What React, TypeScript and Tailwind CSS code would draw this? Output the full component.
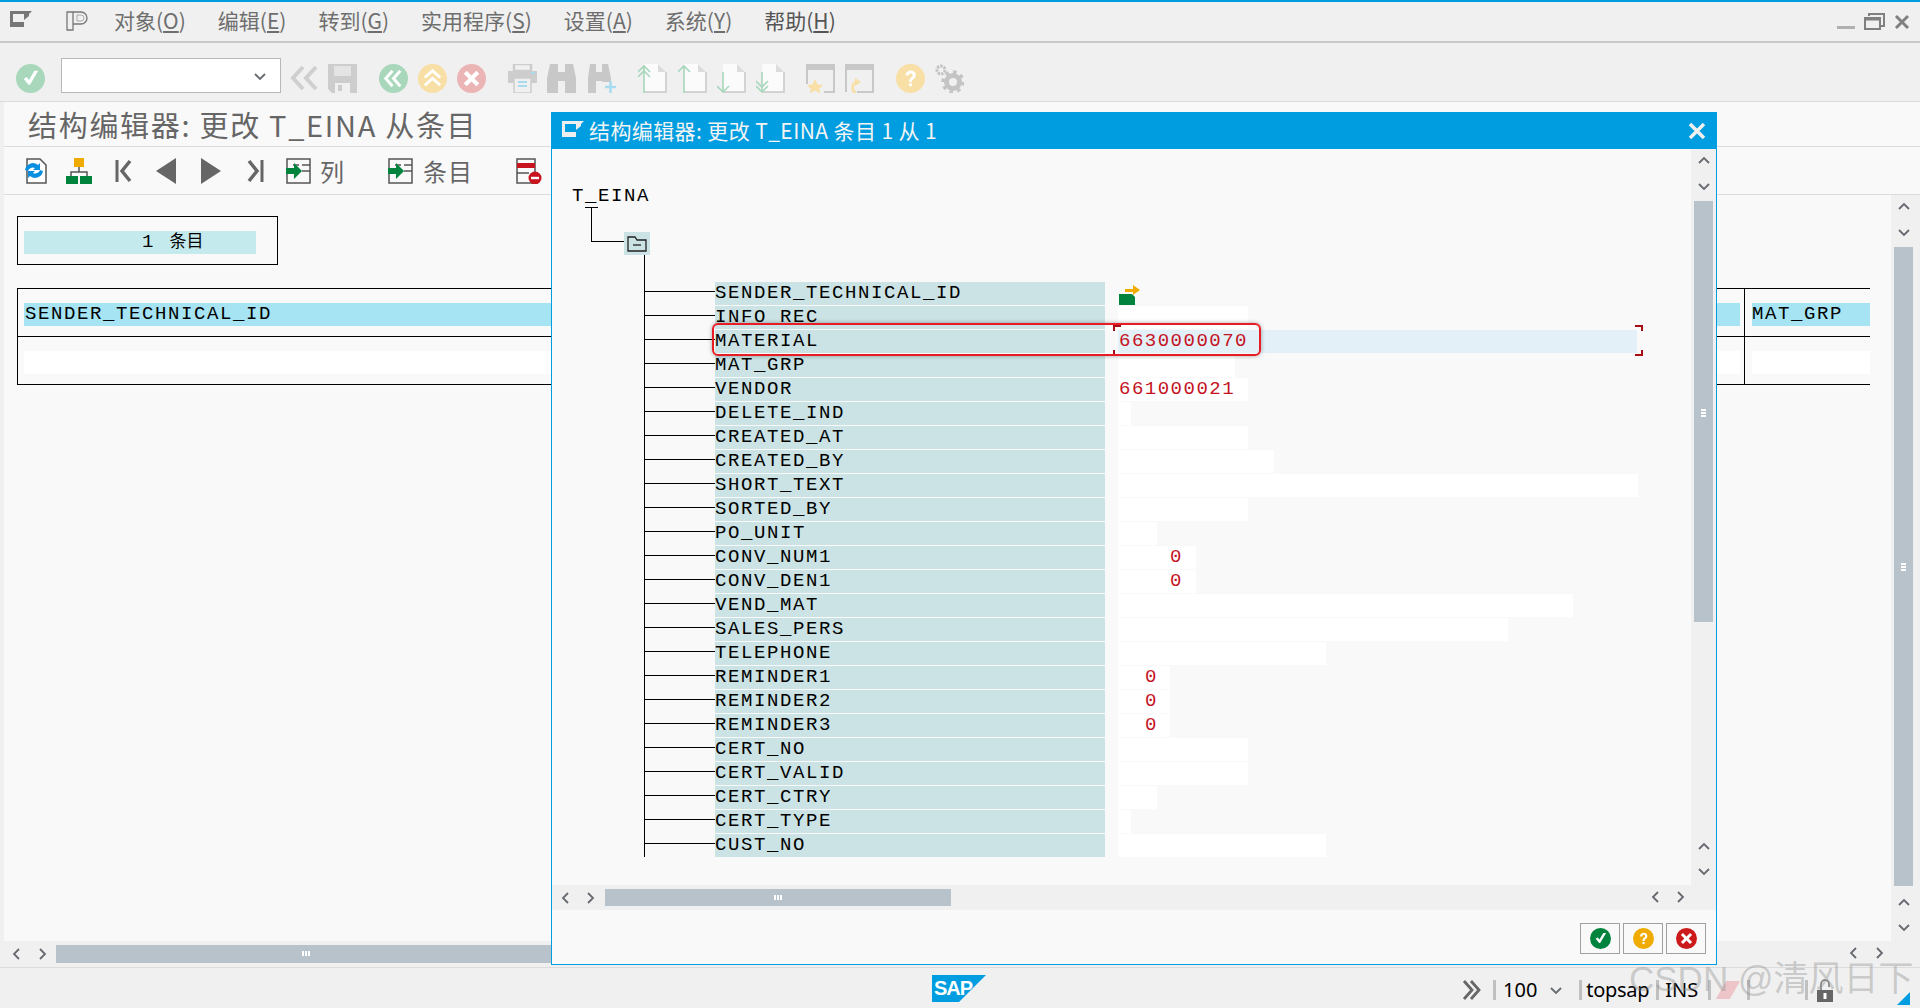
const mono = "font-['Liberation_Mono','Noto_Sans_CJK_SC',monospace]";
const ui = "font-['Noto_Sans_CJK_SC','Noto_Sans',sans-serif]";

const menus = [
  ["对象(", "O"],
  ["编辑(", "E"],
  ["转到(", "G"],
  ["实用程序(", "S"],
  ["设置(", "A"],
  ["系统(", "Y"],
  ["帮助(", "H"],
];

type Field = { name: string; w?: number; value?: string; pad?: number };

const fields: Field[] = [
  { name: "SENDER_TECHNICAL_ID", w: 0 },
  { name: "INFO_REC", w: 130 },
  { name: "MATERIAL", w: 519, value: "6630000070", pad: 1 },
  { name: "MAT_GRP", w: 117 },
  { name: "VENDOR", w: 130, value: "661000021", pad: 1 },
  { name: "DELETE_IND", w: 13 },
  { name: "CREATED_AT", w: 130 },
  { name: "CREATED_BY", w: 156 },
  { name: "SHORT_TEXT", w: 520 },
  { name: "SORTED_BY", w: 130 },
  { name: "PO_UNIT", w: 39 },
  { name: "CONV_NUM1", w: 78, value: "0", pad: 52 },
  { name: "CONV_DEN1", w: 78, value: "0", pad: 52 },
  { name: "VEND_MAT", w: 455 },
  { name: "SALES_PERS", w: 390 },
  { name: "TELEPHONE", w: 208 },
  { name: "REMINDER1", w: 52, value: "0", pad: 27 },
  { name: "REMINDER2", w: 52, value: "0", pad: 27 },
  { name: "REMINDER3", w: 52, value: "0", pad: 27 },
  { name: "CERT_NO", w: 130 },
  { name: "CERT_VALID", w: 130 },
  { name: "CERT_CTRY", w: 39 },
  { name: "CERT_TYPE", w: 13 },
  { name: "CUST_NO", w: 208 },
];

function Chevron({ dir, className = "" }: { dir: "up" | "down" | "left" | "right"; className?: string }) {
  const pts = {
    up: "1,8 6,3 11,8",
    down: "1,4 6,9 11,4",
    left: "8,1 3,6 8,11",
    right: "4,1 9,6 4,11",
  }[dir];
  return (
    <svg width="12" height="12" viewBox="0 0 12 12" className={className}>
      <polyline points={pts} fill="none" stroke="#666a70" strokeWidth="1.8" />
    </svg>
  );
}

function Grip({ vertical, className = "" }: { vertical?: boolean; className?: string }) {
  return (
    <div className={`absolute flex gap-px ${vertical ? "flex-col" : ""} ${className}`}>
      <div className={vertical ? "w-[5px] h-[2px] bg-white" : "w-[2px] h-[5px] bg-white"} />
      <div className={vertical ? "w-[5px] h-[2px] bg-white" : "w-[2px] h-[5px] bg-white"} />
      <div className={vertical ? "w-[5px] h-[2px] bg-white" : "w-[2px] h-[5px] bg-white"} />
    </div>
  );
}

function Check({ size = 29, bg }: { size?: number; bg: string }) {
  return (
    <svg width={size} height={size} viewBox="0 0 30 30" className="shrink-0">
      <circle cx="15" cy="15" r="15" fill={bg} />
      <path d="M8 15.500l5 6 1.500 0L23 7l-4 0-5.500 9.500-2.500-3z" fill="#fff" />
    </svg>
  );
}

function Cross({ size = 29, bg }: { size?: number; bg: string }) {
  return (
    <svg width={size} height={size} viewBox="0 0 30 30" className="shrink-0">
      <circle cx="15" cy="15" r="15" fill={bg} />
      <path d="M10 7l5 5 5-5 3 3-5 5 5 5-3 3-5-5-5 5-3-3 5-5-5-5z" fill="#fff" />
    </svg>
  );
}

function Help({ size = 29, bg }: { size?: number; bg: string }) {
  return (
    <svg width={size} height={size} viewBox="0 0 30 30" className="shrink-0">
      <circle cx="15" cy="15" r="15" fill={bg} />
      <path d="M10 12c0-7 10.500-7 10.500-.5 0 4-4 4-4 7h-3c0-4.500 3.800-4.500 3.800-6.800 0-2.700-4.100-2.400-4.100.3z" fill="#fff" />
      <rect x="13.500" y="20" width="3" height="3" fill="#fff" />
    </svg>
  );
}

function ChevCircle({ bg, up }: { bg: string; up?: boolean }) {
  return (
    <svg width="29" height="29" viewBox="0 0 30 30" className="shrink-0">
      <circle cx="15" cy="15" r="15" fill={bg} />
      <g fill="none" stroke="#fff" strokeWidth="3" transform={up ? "rotate(90 15 15)" : undefined}>
        <polyline points="14,7 7,15 14,23" />
        <polyline points="22,7 15,15 22,23" />
      </g>
    </svg>
  );
}

function DocArrow({ up, double, className = "" }: { up?: boolean; double?: boolean; className?: string }) {
  return (
    <svg width="29" height="29" viewBox="0 0 29 29" className={`shrink-0 ${className}`}>
      <path d="M6 0h14l8 8v20H6z" fill="#fbfbfb" />
      <path d="M20 0l8 8h-8z" fill="#dcdcdc" />
      <path d="M6 28h22V8" fill="none" stroke="#c8c8c8" strokeWidth="1.500" />
      {up ? (
        <g fill="none" stroke="#a9d7bc" strokeWidth="1.600">
          <path d="M6 29V2M0 8l6-6 6 6" />
          {double && <path d="M0 13l6-6 6 6" />}
        </g>
      ) : (
        <g fill="none" stroke="#a9d7bc" strokeWidth="1.600">
          <path d="M6 8v20M0 22l6 6 6-6" />
          {double && <path d="M0 17l6 6 6-6" />}
        </g>
      )}
    </svg>
  );
}

function ColumnIcon() {
  return (
    <svg width="26" height="26" viewBox="0 0 26 26" className="shrink-0">
      <path d="M1 1h23v24H1z" fill="none" stroke="#555" strokeWidth="1.500" />
      <path d="M7 7h6M16 7h8M16 13h8" stroke="#555" strokeWidth="1.500" />
      <path d="M0 10h8V5l8 8-8 8v-5H0z" fill="#00843d" />
    </svg>
  );
}

function Sep() {
  return <div className="w-[3px] h-[20px] bg-[#c0c0c0]" />;
}

export default function App() {
  return (
    <div className={`w-[1920px] h-[1008px] relative overflow-hidden bg-[#f0f0f0] flex flex-col ${ui}`}>
      <div className="h-[2px] bg-[#009de0]" />

      {/* menu bar */}
      <div className="h-[41px] shrink-0 flex items-center border-b-2 border-[#c8c8c8] relative">
        <svg width="22" height="16" viewBox="0 0 22 16" className="ml-[10px] -mt-[6px] shrink-0">
          <path d="M0 0h22l-3 3v2l-5 4v7H0z" fill="#777" />
          <path d="M3 3h11v8H3z" fill="#f0f0f0" />
        </svg>
        <svg width="22" height="20" viewBox="0 0 22 20" className="ml-[34px] -mt-[2px] shrink-0">
          <path d="M1 1h6v18H1z" fill="none" stroke="#777" strokeWidth="1.300" />
          <path d="M7 1h8a6 6 0 0 1 0 12H7" fill="none" stroke="#777" strokeWidth="1.300" />
          <path d="M11 4h4a3 3 0 0 1 0 6h-4z" fill="none" stroke="#aaa" strokeWidth="1" />
        </svg>
        <div className="flex gap-[32px] ml-[26px] -mt-[2px] text-[21px] text-[#6e6e6e] leading-none">
          {menus.map(([a, b], i) => (
            <span key={b} className={i === 6 ? "text-[#555]" : ""}>
              {a}
              <span className="underline underline-offset-2">{b}</span>)
            </span>
          ))}
        </div>
        <div className="absolute right-[10px] top-[11px] flex items-end gap-[9px]">
          <div className="w-[18px] h-[3px] bg-[#b0b0b0] mb-[1px]" />
          <svg width="21" height="17" viewBox="0 0 21 17">
            <path d="M5 3V1h15v12h-3" fill="none" stroke="#808080" strokeWidth="2" />
            <path d="M1 5h15v11H1z" fill="none" stroke="#808080" strokeWidth="2" />
            <path d="M1 6h15" stroke="#808080" strokeWidth="3" />
          </svg>
          <svg width="16" height="16" viewBox="0 0 16 16">
            <path d="M2 2l12 12M14 2L2 14" stroke="#808080" strokeWidth="3" />
          </svg>
        </div>
      </div>

      {/* system toolbar */}
      <div className="h-[59px] shrink-0 flex items-center pl-[16px] pt-[12px] gap-[10px] border-b border-[#dcdcdc]">
        <Check bg="#a9d7bc" />
        <div className="w-[220px] h-[35px] ml-[6px] bg-white border border-[#b8b8b8] flex items-center justify-end pr-[14px] -mt-[5px]">
          <Chevron dir="down" />
        </div>
        <svg width="28" height="28" viewBox="0 0 28 28" className="-ml-[1px] shrink-0">
          <g fill="none" stroke="#cfcfcf" strokeWidth="4">
            <polyline points="13,3 3,14 13,25" />
            <polyline points="26,3 16,14 26,25" />
          </g>
        </svg>
        <svg width="29" height="29" viewBox="0 0 29 29" className="shrink-0">
          <path d="M0 0h29v29H4l-4-4z" fill="#cdcdcd" />
          <rect x="6" y="2" width="17" height="10" fill="#e4e4e4" />
          <rect x="7" y="19" width="15" height="10" fill="#f0f0f0" />
          <rect x="10" y="21" width="4" height="6" fill="#cdcdcd" />
        </svg>
        <div className="ml-[12px]"><ChevCircle bg="#a9d7bc" /></div>
        <ChevCircle bg="#f8dfa6" up />
        <Cross bg="#ecb5b5" />
        <svg width="29" height="29" viewBox="0 0 29 29" className="ml-[12px] shrink-0">
          <path d="M6 0h17v7H6z" fill="none" stroke="#cdcdcd" strokeWidth="2.500" />
          <path d="M0 7h29v12H0z" fill="#cdcdcd" />
          <rect x="6" y="14" width="17" height="15" fill="#f0f0f0" stroke="#cdcdcd" strokeWidth="1.500" />
          <path d="M10 18h9M10 22h9" stroke="#a8daf0" strokeWidth="2" />
          <rect x="23" y="8" width="4" height="2" fill="#a8daf0" />
        </svg>
        <svg width="29" height="29" viewBox="0 0 29 29" className="shrink-0">
          <path d="M3 0h8v29H0V14zM18 0h8l3 14v15H18zM11 8h7v9h-7z" fill="#c8c8c8" />
        </svg>
        <svg width="28" height="29" viewBox="0 0 28 29" className="ml-[2px] shrink-0">
          <path d="M2 0h6v29H0V14zM14 0h6l3 14v4h-9zM8 8h6v9H8z" fill="#c8c8c8" />
          <path d="M17 23h11M22.500 17v12" stroke="#a8daf0" strokeWidth="2.500" />
        </svg>
        <DocArrow up double className="ml-[12px]" />
        <DocArrow up className="ml-[1px]" />
        <DocArrow />
        <DocArrow double />
        <svg width="29" height="29" viewBox="0 0 29 29" className="ml-[11px] shrink-0">
          <rect width="29" height="6" fill="#c8c8c8" />
          <path d="M1 6v14M28 6v22H18" fill="none" stroke="#c8c8c8" strokeWidth="2" />
          <path d="M9 15l2.500 5.500 5.500.5-4 4 1.500 4.500-5.500-3-5.500 3 1.500-4.500-4-4 5.500-.5z" fill="#f8dfa6" />
        </svg>
        <svg width="29" height="29" viewBox="0 0 29 29" className="shrink-0">
          <rect width="29" height="6" fill="#c8c8c8" />
          <path d="M1 6v22M28 6v22H12" fill="none" stroke="#c8c8c8" strokeWidth="2" />
          <path d="M8 29c-3-5-2-10 2-12v-3l6 4-6 4v-2c-2 2-1 6 2 9z" fill="#f8dfa6" />
        </svg>
        <div className="ml-[12px]"><Help bg="#f8dfa6" /></div>
        <svg width="29" height="29" viewBox="0 0 29 29" className="shrink-0">
          <circle cx="6" cy="6" r="4" fill="none" stroke="#c4c4c4" strokeWidth="3" strokeDasharray="2.500 1" />
          <circle cx="18" cy="18" r="6.500" fill="none" stroke="#c4c4c4" strokeWidth="5" />
          <circle cx="18" cy="18" r="10" fill="none" stroke="#c4c4c4" strokeWidth="3.500" strokeDasharray="3.500 4.300" />
        </svg>
      </div>

      {/* main screen */}
      <div className="flex-1 min-h-0 flex flex-col pl-[4px]">
        <div className="h-[45px] shrink-0 bg-[#f9f9f9] border-b border-[#dcdcdc] flex items-center pl-[24px] text-[29px] text-[#666] leading-none whitespace-nowrap tracking-[1.700px]">
          结构编辑器: 更改 T_EINA 从条目
        </div>
        <div className="h-[48px] shrink-0 bg-[#f9f9f9] border-b border-[#dcdcdc] flex items-center pl-[18px] text-[#666]">
          <svg width="26" height="26" viewBox="0 0 26 26" className="shrink-0">
            <path d="M5 1h13l6 6v18H5z" fill="#fff" stroke="#555" strokeWidth="1.500" />
            <path d="M3 12a8 8 0 0 1 13-5l2-2v7h-7l2-2a5 5 0 0 0-7 3z" fill="#0a8fe0" />
            <path d="M21 13a8 8 0 0 1-13 5l-2 2v-7h7l-2 2a5 5 0 0 0 7-3z" fill="#0a8fe0" />
          </svg>
          <svg width="26" height="26" viewBox="0 0 26 26" className="ml-[18px] shrink-0">
            <rect x="8" y="0" width="10" height="9" fill="#f0ab00" />
            <path d="M13 9v5M5 18v-4h16v4" fill="none" stroke="#555" strokeWidth="1.500" />
            <rect x="0" y="18" width="12" height="8" fill="#00843d" />
            <rect x="14" y="18" width="12" height="8" fill="#00843d" />
          </svg>
          <svg width="17" height="24" viewBox="0 0 17 24" className="ml-[23px] shrink-0">
            <path d="M2 1v22" stroke="#666" strokeWidth="3" />
            <path d="M15 2L7 12l8 10" fill="none" stroke="#666" strokeWidth="3.500" />
          </svg>
          <svg width="20" height="26" viewBox="0 0 20 26" className="ml-[24px] shrink-0">
            <path d="M20 0v26L0 13z" fill="#666" />
          </svg>
          <svg width="20" height="26" viewBox="0 0 20 26" className="ml-[25px] shrink-0">
            <path d="M0 0v26l20-13z" fill="#666" />
          </svg>
          <svg width="17" height="24" viewBox="0 0 17 24" className="ml-[26px] shrink-0">
            <path d="M15 1v22" stroke="#666" strokeWidth="3" />
            <path d="M2 2l8 10-8 10" fill="none" stroke="#666" strokeWidth="3.500" />
          </svg>
          <div className="ml-[22px]"><ColumnIcon /></div>
          <span className="ml-[8px] text-[24px] leading-none tracking-[1px]">列</span>
          <div className="ml-[43px]"><ColumnIcon /></div>
          <span className="ml-[9px] text-[24px] leading-none tracking-[1px]">条目</span>
          <svg width="26" height="26" viewBox="0 0 26 26" className="ml-[43px] shrink-0">
            <path d="M1 1h18v24H1z" fill="none" stroke="#555" strokeWidth="1.500" />
            <rect x="1" y="5" width="18" height="5" fill="#c8141e" />
            <path d="M1 15h12" stroke="#555" strokeWidth="1.500" />
            <circle cx="19" cy="20" r="6.500" fill="#c8141e" />
            <rect x="15" y="18.800" width="8" height="2.400" fill="#fff" />
          </svg>
        </div>

        <div className="flex-1 min-h-0 flex">
          <div className="flex-1 min-w-0 flex flex-col">
            <div className={`h-[746px] shrink-0 bg-[#f9f9f9] pl-[13px] pt-[21px] ${mono}`}>
              <div className="w-[261px] h-[49px] border border-black pl-[6px] pt-[14px]">
                <div className="w-[232px] h-[23px] bg-[#c5eaed] flex items-center text-[19px] text-black leading-none pl-[118px]">
                  <span>1</span>
                  <span className="ml-[16px] text-[17px]">条目</span>
                </div>
              </div>
              <div className="w-[1853px] h-[97px] mt-[23px] border-y border-l border-black flex flex-col">
                <div className="h-[48px] flex border-b border-black">
                  <div className="w-[1727px] border-r border-black pl-[6px] pt-[14px]">
                    <div className="w-[1716px] h-[23px] bg-[#a6e4f4] text-[19px] tracking-[1.600px] leading-[23px] pl-[1px]">SENDER_TECHNICAL_ID</div>
                  </div>
                  <div className="flex-1 pl-[7px] pt-[14px]">
                    <div className="w-full h-[23px] bg-[#a6e4f4] text-[19px] tracking-[1.600px] leading-[23px]">MAT_GRP</div>
                  </div>
                </div>
                <div className="flex-1 flex">
                  <div className="w-[1727px] border-r border-black pl-[6px] pt-[14px]">
                    <div className="w-[1716px] h-[23px] bg-white" />
                  </div>
                  <div className="flex-1 pl-[7px] pt-[14px]">
                    <div className="w-full h-[23px] bg-white" />
                  </div>
                </div>
              </div>
            </div>
            <div className="h-[25px] shrink-0 flex items-center relative">
              <Chevron dir="left" className="ml-[7px]" />
              <Chevron dir="right" className="ml-[13px]" />
              <div className="ml-[8px] w-[1200px] h-[18px] bg-[#b8c2cb]" />
              <Grip className="left-[298px] top-[10px]" />
              <Chevron dir="left" className="absolute left-[1844px] top-[6px]" />
              <Chevron dir="right" className="absolute left-[1869px] top-[6px]" />
            </div>
            <div className="flex-1" />
          </div>
          <div className="w-[29px] shrink-0 h-[746px] flex flex-col items-center relative">
            <Chevron dir="up" className="mt-[6px] -ml-[4px]" />
            <Chevron dir="down" className="mt-[13px] -ml-[4px]" />
            <div className="w-[19px] h-[639px] bg-[#b8c2cb] mt-[9px] -ml-[4px]" />
            <Grip vertical className="left-[10px] top-[368px]" />
            <Chevron dir="up" className="mt-[11px] -ml-[4px]" />
            <Chevron dir="down" className="mt-[12px] -ml-[4px]" />
          </div>
        </div>

        {/* status bar */}
        <div className="h-[41px] shrink-0 -ml-[4px] border-t border-[#dcdcdc] flex items-center relative">
          <svg width="54" height="27" viewBox="0 0 54 27" className="absolute left-[932px] top-[7px]">
            <path d="M0 0h54L27 27H0z" fill="#009de0" />
            <text x="2" y="20" fontFamily="Liberation Sans" fontWeight="700" fontSize="20" fill="#fff" letterSpacing="-1">SAP</text>
          </svg>
          <div className="absolute left-[1462px] top-[10px] flex items-center text-[20px] text-black leading-none font-['Noto_Sans',sans-serif]">
            <svg width="20" height="20" viewBox="0 0 20 20" className="shrink-0">
              <g fill="none" stroke="#666" strokeWidth="2.800">
                <polyline points="2,1 10,10 2,19" />
                <polyline points="9,1 17,10 9,19" />
              </g>
            </svg>
            <div className="ml-[11px]"><Sep /></div>
            <span className="ml-[7px]">100</span>
            <Chevron dir="down" className="ml-[13px]" />
            <div className="ml-[17px]"><Sep /></div>
            <span className="ml-[4px] tracking-[-0.3px]">topsap</span>
            <div className="ml-[7px]"><Sep /></div>
            <span className="ml-[6px]">INS</span>
            <div className="ml-[10px]"><Sep /></div>
            <div className="ml-[10px] w-[14px] h-[18px] bg-[#edc4c8] skew-x-[-30deg]" />
            <div className="ml-[12px]"><Sep /></div>
            <div className="ml-[55px]"><Sep /></div>
            <svg width="16" height="24" viewBox="0 0 16 24" className="ml-[9px] shrink-0">
              <path d="M4 12V6a4 4 0 0 1 8 0v3" fill="none" stroke="#777" strokeWidth="1.500" />
              <rect y="12" width="16" height="12" fill="#666" />
              <rect x="6.500" y="15" width="3" height="6" fill="#fff" />
            </svg>
          </div>
          <div className="absolute left-[1897px] top-[24px] w-0 h-0 border-b-[13px] border-l-[13px] border-b-[#009de0] border-l-transparent" />
        </div>
      </div>

      {/* popup */}
      <div className="absolute left-[551px] top-[112px] w-[1166px] h-[853px] border border-[#009de0] border-t-0 bg-[#f9f9f9] flex flex-col">
        <div className="h-[37px] shrink-0 bg-[#009de0] -mx-px flex items-center pl-[11px] pr-[11px] text-white text-[21px] leading-none whitespace-nowrap">
          <svg width="22" height="16" viewBox="0 0 22 16" className="shrink-0 -mt-[4px]">
            <path d="M0 0h22l-3 3v2l-5 4v7H0z" fill="#eee" />
            <path d="M3 3h11v8H3z" fill="#009de0" />
          </svg>
          <span className="ml-[5px] text-[#f4f4f4] tracking-[0.4px]">结构编辑器: 更改 T_EINA 条目 1 从 1</span>
          <svg width="18" height="18" viewBox="0 0 18 18" className="ml-auto">
            <path d="M2 2l14 14M16 2L2 16" stroke="#f0f0f0" strokeWidth="3.500" />
          </svg>
        </div>
        <div className="flex-1 min-h-0 flex">
          <div className={`flex-1 min-w-0 flex flex-col ${mono}`}>
            <div className="h-[736px] shrink-0 pt-[36px] pl-[20px] relative text-[19px] text-black">
              <div className="h-[23px] leading-[23px] tracking-[1.600px]">T_EINA</div>
              {/* tree connectors */}
              <div className="ml-[13px] w-[13px] h-px bg-black mt-[-1px]" />
              <div className="ml-[19px] flex items-end h-[34px]">
                <div className="w-[33px] h-full border-l border-b border-black" />
                <div className="w-[26px] h-[23px] -mb-[13px] bg-[#cbe3e4] flex items-center justify-center">
                  <svg width="20" height="16" viewBox="0 0 20 16">
                    <path d="M1 15V1h7l2 3h9v11z" fill="none" stroke="#222" strokeWidth="1.300" />
                    <path d="M6 9h8" stroke="#222" strokeWidth="1.300" />
                  </svg>
                </div>
              </div>
              <div className="ml-[72px] mt-[13px] border-l border-black h-[602px] flex flex-col pt-[27px]">
                {fields.map((f, i) => (
                  <div key={f.name} className="flex h-[24px] shrink-0">
                    <div className="w-[70px] h-[10px] border-b border-black shrink-0" />
                    <div className="w-[390px] h-[23px] bg-[#cbe3e4] leading-[23px] tracking-[1.600px] shrink-0">{f.name}</div>
                    <div
                      className={`ml-[13px] h-[23px] leading-[23px] tracking-[1.500px] text-[#c4131f] relative ${i === 2 ? "bg-[#e3f0f8]" : "bg-white"}`}
                      style={{ width: f.w, paddingLeft: f.pad }}
                    >
                      {f.value}
                      {i === 0 && (
                        <svg width="22" height="20" viewBox="0 0 22 20" className="absolute left-[1px] top-[3px]">
                          <path d="M0 9h13l3 3v8H0z" fill="#00843d" />
                          <path d="M6 4h8V0l7 5-7 5V7H6z" fill="#f0ab00" />
                        </svg>
                      )}
                    </div>
                    {i === 2 && (
                      <>
                        <div className="absolute left-[561px] top-[176px] w-[8px] h-[6px] border-l-2 border-t-2 border-[#a80c14]" />
                        <div className="absolute left-[561px] top-[201px] w-[8px] h-[6px] border-l-2 border-b-2 border-[#a80c14]" />
                        <div className="absolute left-[1083px] top-[176px] w-[8px] h-[6px] border-r-2 border-t-2 border-[#a80c14]" />
                        <div className="absolute left-[1083px] top-[201px] w-[8px] h-[6px] border-r-2 border-b-2 border-[#a80c14]" />
                      </>
                    )}
                  </div>
                ))}
              </div>
            </div>
            <div className="h-[25px] shrink-0 -mr-[25px] bg-[#f0f0f0] flex items-center relative">
              <Chevron dir="left" className="ml-[8px]" />
              <Chevron dir="right" className="ml-[12px]" />
              <div className="ml-[9px] w-[346px] h-[17px] bg-[#b8c2cb]" />
              <Grip className="left-[222px] top-[10px]" />
              <Chevron dir="left" className="absolute left-[1098px] top-[6px]" />
              <Chevron dir="right" className="absolute left-[1122px] top-[6px]" />
            </div>
            <div className="flex-1 -mr-[25px] flex items-center justify-end pr-[10px] gap-[3px] pt-[2px]">
              <div className="w-[40px] h-[31px] border border-[#a0a0a0] flex items-center justify-center"><Check size={21} bg="#00843d" /></div>
              <div className="w-[40px] h-[31px] border border-[#a0a0a0] flex items-center justify-center"><Help size={21} bg="#f0ab00" /></div>
              <div className="w-[40px] h-[31px] border border-[#a0a0a0] flex items-center justify-center"><Cross size={21} bg="#cc1919" /></div>
            </div>
          </div>
          <div className="w-[25px] shrink-0 h-[736px] bg-[#f0f0f0] flex flex-col items-center relative">
            <Chevron dir="up" className="mt-[6px]" />
            <Chevron dir="down" className="mt-[13px]" />
            <div className="w-[19px] h-[421px] bg-[#b8c2cb] mt-[9px]" />
            <Grip vertical className="left-[10px] top-[260px]" />
            <Chevron dir="up" className="mt-auto" />
            <Chevron dir="down" className="mt-[12px] mb-[8px]" />
          </div>
        </div>
      </div>

      {/* annotation on the screenshot */}
      <div className="absolute left-[712px] top-[323px] w-[549px] h-[33px] border-2 border-[#e81c24] rounded-[6px] shadow-[0_0_4px_rgba(0,0,0,0.35)]" />

      {/* watermark */}
      <div className="absolute left-[1629px] top-[955px] text-[35px] leading-[48px] whitespace-nowrap text-[rgba(140,140,140,0.4)] font-['Liberation_Sans','Noto_Sans_CJK_SC',sans-serif]">
        CSDN @清风日下
      </div>
    </div>
  );
}
